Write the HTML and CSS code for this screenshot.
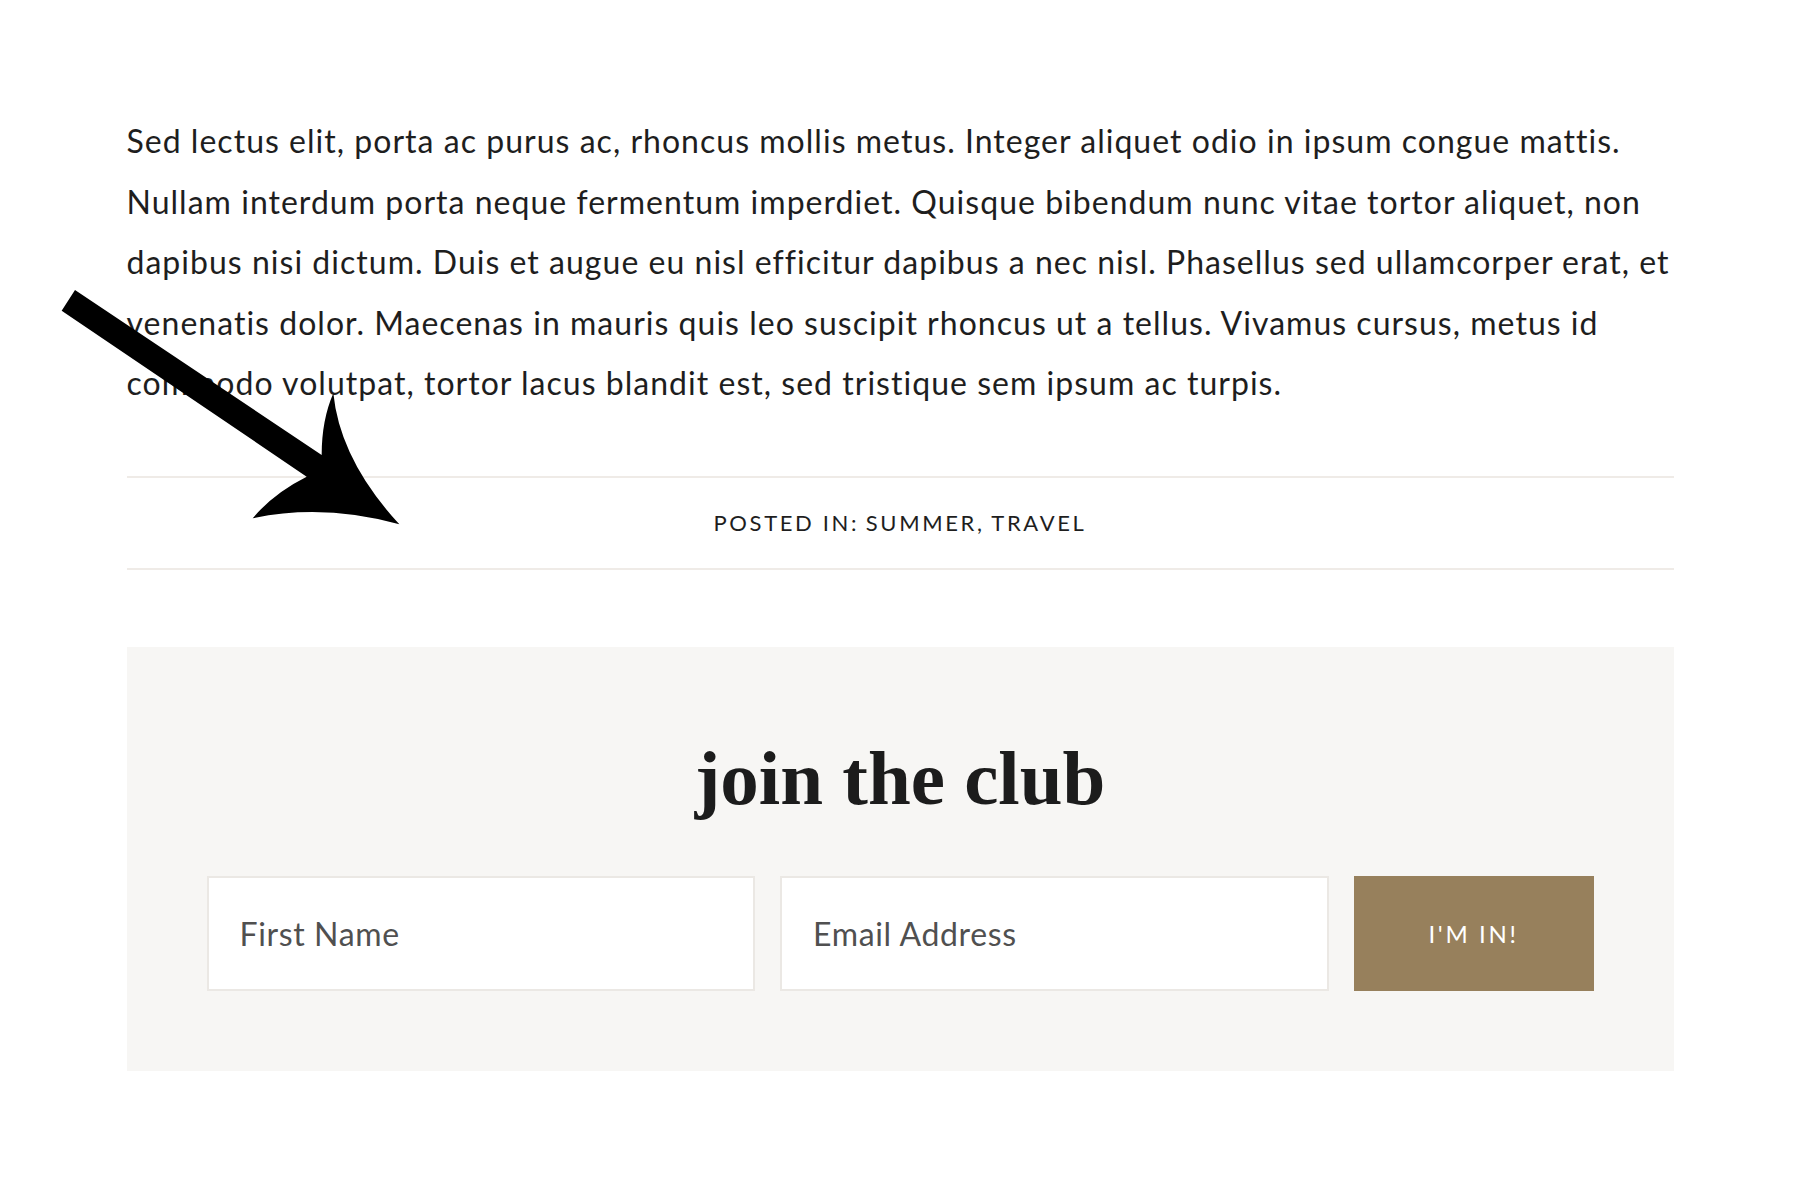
FILE: index.html
```html
<!DOCTYPE html>
<html lang="en">

<head>
    <meta charset="UTF-8">
    <meta name="viewport" content="width=device-width, initial-scale=1.0">
    <title>Join the club</title>
    <link rel="stylesheet" href="styles.css">
</head>

<body>
    <div class="post">
        <p class="post-body">
            Sed lectus elit, porta ac purus ac, rhoncus mollis metus. Integer aliquet odio in ipsum congue mattis.
            Nullam interdum porta neque fermentum imperdiet. Quisque bibendum nunc vitae tortor aliquet, non
            dapibus nisi dictum. Duis et augue eu nisl efficitur dapibus a nec nisl. Phasellus sed ullamcorper erat, et
            venenatis dolor. Maecenas in mauris quis leo suscipit rhoncus ut a tellus. Vivamus cursus, metus id
            commodo volutpat, tortor lacus blandit est, sed tristique sem ipsum ac turpis.
        </p>

        <div class="post-meta">
            Posted in: <a href="#">Summer</a>, <a href="#">Travel</a>
        </div>

        <section class="club">
            <h2 class="club-title">join the club</h2>
            <form class="club-form" onsubmit="return false">
                <input type="text" class="club-input" placeholder="First Name">
                <input type="email" class="club-input" placeholder="Email Address">
                <button type="submit" class="club-btn">I'm in!</button>
            </form>
        </section>
    </div>

    <!-- hand drawn pointer over the content -->
    <svg class="arrow" viewBox="0 0 1200 780" aria-hidden="true">
        <path d="M105 30 L845 525 Q845 420 880 340 Q900 540 1078 733 Q850 670 638 715 Q700 640 800 590 L65 92 Z" fill="#000" />
    </svg>
</body>

</html>
```

FILE: styles.css
```css
body {
    margin: 0;
    background-color: #fff;
    font-family: Lato, "Noto Sans", sans-serif;
    color: #1e1e1e;
    position: relative;
}

.post {
    max-width: 1547px;
    margin: 0 auto;
    padding: 111px 0 120px;
}

.post-body {
    margin: 0;
    font-size: 32px;
    letter-spacing: 0.032em;
    line-height: 60.6px;
}

.post-meta {
    margin-top: 62px;
    height: 90px;
    border-top: 2px solid #efebe7;
    border-bottom: 2px solid #efebe7;
    display: flex;
    align-items: center;
    justify-content: center;
    font-size: 22px;
    letter-spacing: 0.12em;
    text-transform: uppercase;
    color: #1e1e1e;
}

.post-meta a {
    color: inherit;
    text-decoration: none;
    margin-left: 0.3em;
}

.club {
    margin-top: 77px;
    background-color: #f7f6f4;
    padding: 93px 80px 80px;
}

.club-title {
    margin: 0 0 60px;
    text-align: center;
    font-family: "Liberation Serif", "Times New Roman", serif;
    font-weight: bold;
    font-size: 77px;
    line-height: 76px;
    color: #1c1c1c;
}

.club-form {
    display: grid;
    grid-template-columns: 1fr 1fr 240px;
    gap: 25px;
    height: 115px;
}

.club-input {
    box-sizing: border-box;
    height: 100%;
    border: 2px solid #ebe8e4;
    background-color: #fff;
    padding: 0 31px;
    font-family: Lato, "Noto Sans", sans-serif;
    font-size: 32px;
    letter-spacing: 0.02em;
    color: #333;
    outline: none;
}

.club-input::placeholder {
    color: #505050;
}

.club-btn {
    border: none;
    background-color: #97805c;
    color: #fff;
    font-family: Lato, "Noto Sans", sans-serif;
    font-size: 24px;
    letter-spacing: 0.11em;
    text-transform: uppercase;
    cursor: pointer;
}

.arrow {
    position: absolute;
    left: 40px;
    top: 280px;
    width: 400px;
    height: 260px;
}
```
